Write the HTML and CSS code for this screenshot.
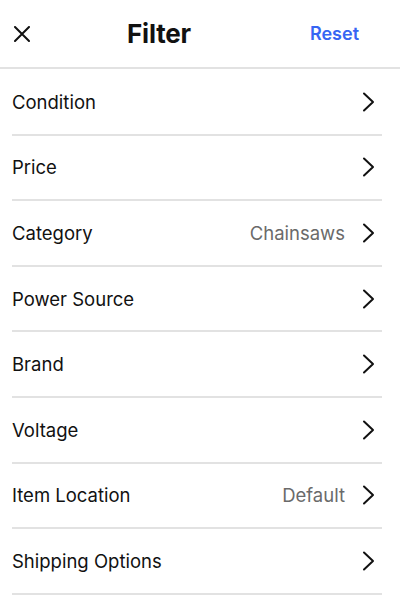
FILE: index.html
```html
<!DOCTYPE html>
<html>
<head>
    <meta charset="utf-8">
    <link rel="stylesheet" href="styles.css">
</head>
<body>
    <header class="topbar">
        <button class="close" aria-label="Close">
            <svg width="16" height="16" viewBox="0 0 16 16">
                <path d="M1 1 L15 15 M15 1 L1 15" stroke="#111" stroke-width="2" stroke-linecap="round" fill="none"/>
            </svg>
        </button>
        <h1 class="title">Filter</h1>
        <a class="reset" href="#">Reset</a>
    </header>

    <ul class="filters">
        <li class="row"><span class="label">Condition</span><span class="chev"></span></li>
        <li class="row"><span class="label">Price</span><span class="chev"></span></li>
        <li class="row"><span class="label">Category</span><span class="value">Chainsaws</span><span class="chev"></span></li>
        <li class="row"><span class="label">Power Source</span><span class="chev"></span></li>
        <li class="row"><span class="label">Brand</span><span class="chev"></span></li>
        <li class="row"><span class="label">Voltage</span><span class="chev"></span></li>
        <li class="row"><span class="label">Item Location</span><span class="value">Default</span><span class="chev"></span></li>
        <li class="row"><span class="label">Shipping Options</span><span class="chev"></span></li>
    </ul>
</body>
</html>
```

FILE: styles.css
```css
* {
    font-family: 'Inter', 'Noto Sans', sans-serif;
    box-sizing: border-box;
}

html,
body {
    margin: 0;
    background-color: #fff;
    color: #111;
}

.topbar {
    display: flex;
    align-items: center;
    height: 69px;
    padding: 0 41px 0 14px;
    border-bottom: 2px solid #e2e2e2;
}

.close {
    display: flex;
    border: 0;
    padding: 0;
    background: none;
    width: 16px;
    height: 16px;
    margin-top: 1px;
}

.title {
    flex: 1;
    margin: 0 0 0 97px;
    font-size: 26px;
    font-weight: 700;
    letter-spacing: -0.2px;
}

.reset {
    color: #3665f3;
    font-size: 18px;
    font-weight: 600;
    text-decoration: none;
}

.filters {
    list-style: none;
    margin: 1px 18px 0 12px;
    padding: 0;
}

.row {
    display: flex;
    align-items: center;
    height: 65.6px;
    border-bottom: 2px solid #e2e2e2;
    padding-right: 7px;
    font-size: 18.5px;
}

.label {
    flex: 1;
}

.value {
    color: #6a6a6a;
    margin-right: 17px;
}

.chev {
    width: 13px;
    height: 20px;
    background: url("data:image/svg+xml;utf8,<svg xmlns='http://www.w3.org/2000/svg' width='13' height='20' viewBox='0 0 13 20'><path d='M2 1.5 L11 10 L2 18.5' stroke='%23111' stroke-width='2' fill='none' stroke-linecap='round' stroke-linejoin='round'/></svg>") no-repeat;
}
```
